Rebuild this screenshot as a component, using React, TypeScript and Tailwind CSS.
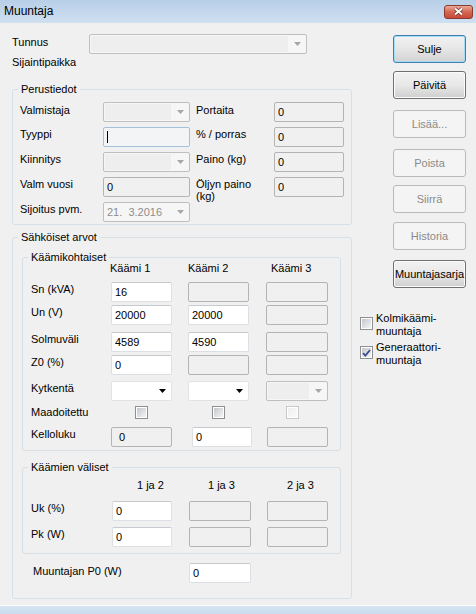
import React from "react";

type BoxProps = {
  w: string;
  value?: string;
  disabled?: boolean;
  focused?: boolean;
  pad?: string;
  className?: string;
};

function TextBox({ w, value = "", disabled = false, focused = false, pad = "pl-[3px]", className = "" }: BoxProps) {
  let look = "bg-white border-[#dcdfe3] border-t-[#c6c9cd]";
  if (disabled) look = "bg-[#f0f0f0] border-[#b4b4b4]";
  if (focused) look = "bg-[#f3f4f6] border-[#a4c2dc]";
  return (
    <div className={`h-[20px] ${w} shrink-0 flex items-center ${pad} rounded-[2px] border ${look} ${className}`}>
      {focused ? <span className="w-[1px] h-[12px] bg-black" /> : value}
    </div>
  );
}

function Arrow({ dark }: { dark: boolean }) {
  return (
    <svg width="7" height="4" viewBox="0 0 7 4">
      <path d="M0 0H7L3.5 4Z" fill={dark ? "#000000" : "#a6a6a6"} />
    </svg>
  );
}

function Combo({ w, disabled = false, value = "", className = "" }: BoxProps) {
  return (
    <div
      className={`h-[20px] ${w} shrink-0 flex rounded-[2px] border ${
        disabled ? "border-[#bfbfbf] bg-[#f6f6f6]" : "border-[#e1e3e6] bg-white"
      } ${className}`}
    >
      <div
        className={`flex-1 flex items-center pl-[3px] whitespace-pre text-[#8d8d8d] ${
          disabled && !value ? "bg-[#eeeeee] m-[1px] rounded-[1px]" : ""
        }`}
      >
        {value}
      </div>
      <div className="w-[17px] flex items-center justify-center">
        <Arrow dark={!disabled} />
      </div>
    </div>
  );
}

function Check({ checked = false, disabled = false }: { checked?: boolean; disabled?: boolean }) {
  return (
    <div
      className={`w-[13px] h-[13px] shrink-0 border p-[1px] flex bg-white ${
        disabled ? "border-[#c9c9c9]" : "border-[#8e8f8f]"
      }`}
    >
      <div
        className={`flex-1 flex items-center justify-center bg-linear-to-br ${
          disabled ? "from-[#efefef] to-[#fafafa]" : "from-[#c4c7cc] to-[#f4f4f4]"
        }`}
      >
        {checked && (
          <svg width="9" height="8" viewBox="0 0 9 8">
            <path d="M1 4.2L3.4 6.6L8 1" stroke="#3d4f8f" strokeWidth="1.8" fill="none" />
          </svg>
        )}
      </div>
    </div>
  );
}

function Btn({ children, kind = "normal", className = "" }: { children: React.ReactNode; kind?: string; className?: string }) {
  let look =
    "border-[#707070] bg-linear-to-b from-[#f2f2f2] via-[#e8e8e8] to-[#cfcfcf] shadow-[inset_0_0_0_1px_#fbfbfb]";
  if (kind === "focus")
    look =
      "border-[#3c7fb1] bg-linear-to-b from-[#f2f2f2] via-[#e6e6e6] to-[#d2d2d2] shadow-[inset_0_0_0_1px_#a8dcf6]";
  if (kind === "disabled") look = "border-[#b7babc] bg-[#f4f4f4] text-[#8a8a8a]";
  return (
    <button
      type="button"
      className={`w-[73px] h-[28px] shrink-0 rounded-[3px] border flex items-center justify-center ${look} ${className}`}
    >
      {children}
    </button>
  );
}

function Label({ w, children, className = "" }: { w: string; children: React.ReactNode; className?: string }) {
  return <div className={`${w} shrink-0 pt-[1px] ${className}`}>{children}</div>;
}

function Group({ title, className = "", children }: { title: string; className?: string; children: React.ReactNode }) {
  return (
    <fieldset className={`border border-[#d5dfe5] rounded-[3px] ${className}`}>
      <legend className="ml-[5px] px-[3px] leading-[13px]">{title}</legend>
      {children}
    </fieldset>
  );
}

export default function App() {
  return (
    <div className="w-[476px] h-[614px] overflow-hidden bg-[#f0f0f0] flex flex-col text-[11px] leading-[13px] text-black font-['Liberation_Sans',Arial,sans-serif]">
      {/* title bar */}
      <div className="h-[23px] shrink-0 flex items-center justify-between pl-[4px] pr-[3px] bg-linear-to-b from-[#b8cfe8] to-[#cfe0f1]">
        <span className="text-[12px]">Muuntaja</span>
        <div className="w-[29px] h-[14px] rounded-[3px] border border-[#8b3a30] bg-linear-to-b from-[#eaa99a] via-[#d4664f] to-[#c9483a] flex items-center justify-center">
          <svg width="11" height="9" viewBox="0 0 11 9">
            <path d="M2 1.5L9 7.5M9 1.5L2 7.5" stroke="#6e2a22" strokeWidth="3.4" />
            <path d="M2 1.5L9 7.5M9 1.5L2 7.5" stroke="#ffffff" strokeWidth="2" />
          </svg>
        </div>
      </div>

      <div className="flex flex-1">
        {/* left side */}
        <div className="w-[352px] shrink-0 pl-[12px] pt-[11px] flex flex-col">
          <div className="flex h-[20px]">
            <Label w="w-[77px]" className="pt-[2px]">Tunnus</Label>
            <Combo w="w-[218px]" disabled />
          </div>
          <div className="mt-[2px]">Sijaintipaikka</div>

          <Group title="Perustiedot" className="mt-[14px] w-[340px]">
            <div className="pl-[7px] pt-[6px] pb-[2px] flex flex-col gap-[5px]">
              <div className="flex h-[20px]">
                <Label w="w-[83px]" className="pt-[2px]">Valmistaja</Label>
                <Combo w="w-[87px]" disabled />
                <Label w="w-[78px]" className="ml-[6px] pt-[2px]">Portaita</Label>
                <TextBox w="w-[70px]" value="0" disabled />
              </div>
              <div className="flex h-[20px]">
                <Label w="w-[83px]">Tyyppi</Label>
                <TextBox w="w-[87px]" focused />
                <Label w="w-[78px]" className="ml-[6px]">% / porras</Label>
                <TextBox w="w-[70px]" value="0" disabled />
              </div>
              <div className="flex h-[20px]">
                <Label w="w-[83px]">Kiinnitys</Label>
                <Combo w="w-[87px]" disabled />
                <Label w="w-[78px]" className="ml-[6px]">Paino (kg)</Label>
                <TextBox w="w-[70px]" value="0" disabled />
              </div>
              <div className="flex h-[20px]">
                <Label w="w-[83px]">Valm vuosi</Label>
                <TextBox w="w-[87px]" value="0" disabled />
                <Label w="w-[78px]" className="ml-[6px] leading-[12px]">
                  Öljyn paino
                  <br />
                  (kg)
                </Label>
                <TextBox w="w-[70px]" value="0" disabled />
              </div>
              <div className="flex h-[20px]">
                <Label w="w-[83px]">Sijoitus pvm.</Label>
                <Combo w="w-[87px]" disabled value="21.  3.2016" />
              </div>
            </div>
          </Group>

          <Group title="Sähköiset arvot" className="mt-[6px] w-[340px]">
            <div className="pl-[9px] pt-[7px] pb-[15px] flex flex-col">
              <Group title="Käämikohtaiset" className="w-[319px]">
                <div className="pl-[8px] pb-[3px] flex flex-col">
                  <div className="flex h-[13px] mt-[-2px]">
                    <div className="w-[79px] shrink-0" />
                    <div className="w-[78px] shrink-0">Käämi 1</div>
                    <div className="w-[83px] shrink-0">Käämi 2</div>
                    <div>Käämi 3</div>
                  </div>
                  <div className="flex h-[20px] mt-[7px]">
                    <Label w="w-[80px]">Sn (kVA)</Label>
                    <TextBox w="w-[61px]" value="16" />
                    <TextBox w="w-[61px]" disabled className="ml-[16px]" />
                    <TextBox w="w-[62px]" disabled className="ml-[17px]" />
                  </div>
                  <div className="flex h-[20px] mt-[3px]">
                    <Label w="w-[80px]">Un (V)</Label>
                    <TextBox w="w-[61px]" value="20000" />
                    <TextBox w="w-[61px]" value="20000" className="ml-[16px]" />
                    <TextBox w="w-[62px]" disabled className="ml-[17px]" />
                  </div>
                  <div className="flex h-[20px] mt-[7px]">
                    <Label w="w-[80px]">Solmuväli</Label>
                    <TextBox w="w-[61px]" value="4589" />
                    <TextBox w="w-[61px]" value="4590" className="ml-[16px]" />
                    <TextBox w="w-[62px]" disabled className="ml-[17px]" />
                  </div>
                  <div className="flex h-[20px] mt-[3px]">
                    <Label w="w-[80px]">Z0 (%)</Label>
                    <TextBox w="w-[61px]" value="0" />
                    <TextBox w="w-[61px]" disabled className="ml-[16px]" />
                    <TextBox w="w-[62px]" disabled className="ml-[17px]" />
                  </div>
                  <div className="flex h-[20px] mt-[6px]">
                    <Label w="w-[80px]">Kytkentä</Label>
                    <Combo w="w-[61px]" />
                    <Combo w="w-[61px]" className="ml-[16px]" />
                    <Combo w="w-[62px]" disabled className="ml-[17px]" />
                  </div>
                  <div className="flex h-[20px] mt-[1px] items-center">
                    <div className="w-[80px] shrink-0">Maadoitettu</div>
                    <div className="w-[78px] shrink-0 pl-[24px]">
                      <Check />
                    </div>
                    <div className="w-[76px] shrink-0 pl-[23px]">
                      <Check />
                    </div>
                    <div className="pl-[21px]">
                      <Check disabled />
                    </div>
                  </div>
                  <div className="flex h-[20px] mt-[5px]">
                    <Label w="w-[80px]">Kelloluku</Label>
                    <TextBox w="w-[61px]" value="0" disabled pad="pl-[7px]" />
                    <TextBox w="w-[60px]" value="0" className="ml-[20px]" />
                    <TextBox w="w-[61px]" disabled className="ml-[15px]" />
                  </div>
                </div>
              </Group>

              <Group title="Käämien väliset" className="mt-[10px] w-[319px]">
                <div className="pl-[8px] pt-[5px] pb-[6px] flex flex-col">
                  <div className="flex h-[13px]">
                    <div className="w-[106px] shrink-0" />
                    <div className="w-[71px] shrink-0">1 ja 2</div>
                    <div className="w-[79px] shrink-0">1 ja 3</div>
                    <div>2 ja 3</div>
                  </div>
                  <div className="flex h-[20px] mt-[9px]">
                    <Label w="w-[81px]">Uk (%)</Label>
                    <TextBox w="w-[60px]" value="0" />
                    <TextBox w="w-[62px]" disabled className="ml-[17px]" />
                    <TextBox w="w-[61px]" disabled className="ml-[16px]" />
                  </div>
                  <div className="flex h-[20px] mt-[6px]">
                    <Label w="w-[81px]">Pk (W)</Label>
                    <TextBox w="w-[60px]" value="0" />
                    <TextBox w="w-[62px]" disabled className="ml-[17px]" />
                    <TextBox w="w-[61px]" disabled className="ml-[16px]" />
                  </div>
                </div>
              </Group>

              <div className="flex h-[20px] mt-[9px] pl-[11px]">
                <Label w="w-[156px]" className="pt-[2px]">Muuntajan P0 (W)</Label>
                <TextBox w="w-[62px]" value="0" />
              </div>
            </div>
          </Group>
        </div>

        {/* right side */}
        <div className="flex-1 flex flex-col pt-[12px]">
          <div className="pl-[41px] flex flex-col">
            <Btn kind="focus">Sulje</Btn>
            <Btn className="mt-[8px]">Päivitä</Btn>
            <Btn kind="disabled" className="mt-[11px]">Lisää...</Btn>
            <Btn kind="disabled" className="mt-[11px]">Poista</Btn>
            <Btn kind="disabled" className="mt-[8px]">Siirrä</Btn>
            <Btn kind="disabled" className="mt-[9px]">Historia</Btn>
            <Btn className="mt-[10px]">Muuntajasarja</Btn>
          </div>
          <div className="pl-[8px] mt-[24px] flex flex-col gap-[3px]">
            <div className="flex items-center gap-[3px]">
              <div className="mb-[3px]">
                <Check />
              </div>
              <div>
                Kolmikäämi-
                <br />
                muuntaja
              </div>
            </div>
            <div className="flex items-center gap-[3px]">
              <div className="mb-[3px]">
                <Check checked />
              </div>
              <div>
                Generaattori-
                <br />
                muuntaja
              </div>
            </div>
          </div>
        </div>
      </div>

      {/* window frame bottom */}
      <div className="h-[9px] shrink-0 border-t border-[#fafcfe] bg-linear-to-b from-[#d6e4f2] to-[#cadbee]" />
    </div>
  );
}
